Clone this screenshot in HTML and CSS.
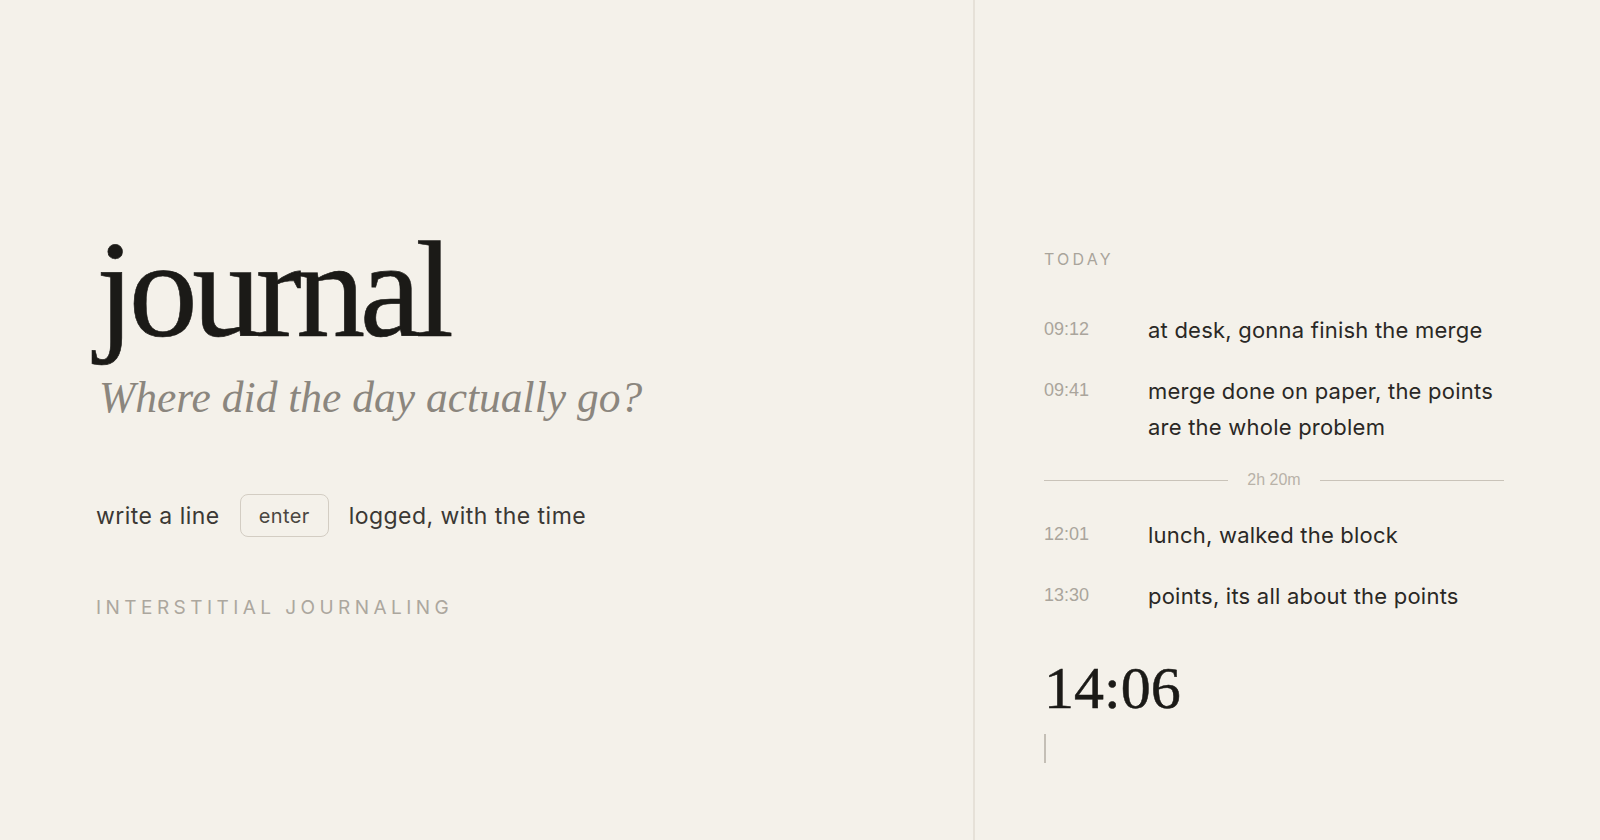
FILE: index.html
```html
<!DOCTYPE html>
<html lang="en">
<head>
<meta charset="utf-8">
<title>journal</title>
<link rel="stylesheet" href="styles.css">
</head>
<body>
<main class="app">
  <section class="intro">
    <h1 class="title">journal</h1>
    <p class="subtitle">Where did the day actually go?</p>
    <div class="howto">
      <span>write a line</span>
      <kbd class="key">enter</kbd>
      <span>logged, with the time</span>
    </div>
    <p class="tag">Interstitial journaling</p>
  </section>
  <section class="log">
    <h2 class="day">Today</h2>
    <ul class="entries">
      <li class="entry"><span class="time">09:12</span><span class="text">at desk, gonna finish the merge</span></li>
      <li class="entry"><span class="time">09:41</span><span class="text">merge done on paper, the points are the whole problem</span></li>
      <li class="gap"><span class="rule"></span><span class="gap-label">2h 20m</span><span class="rule"></span></li>
      <li class="entry"><span class="time">12:01</span><span class="text">lunch, walked the block</span></li>
      <li class="entry"><span class="time">13:30</span><span class="text">points, its all about the points</span></li>
    </ul>
    <div class="clock">14:06</div>
    <div class="cursor"></div>
  </section>
</main>
</body>
</html>
```
FILE: styles.css
```css
* { box-sizing: border-box; }
html, body { margin: 0; padding: 0; }
body {
  background: #f4f1ea;
  font-family: Inter, "Noto Sans", sans-serif;
  color: #2b2926;
  width: 1600px;
  height: 840px;
  overflow: hidden;
}
.app {
  display: grid;
  grid-template-columns: 1fr 627px;
  height: 840px;
}
.intro {
  display: flex;
  flex-direction: column;
  justify-content: center;
  padding-left: 96px;
}
.title {
  margin: 0;
  font-family: "Liberation Serif", serif;
  font-weight: 400;
  font-size: 138px;
  line-height: 138px;
  letter-spacing: -0.04em;
  color: #1b1a17;
  -webkit-text-stroke: 0.6px #1b1a17;
}
.subtitle {
  margin: 12px 0 0 3px;
  font-family: "Liberation Serif", serif;
  font-style: italic;
  font-size: 43.5px;
  line-height: 53px;
  color: #8b867e;
}
.howto {
  margin-top: 70px;
  display: flex;
  align-items: center;
  gap: 20px;
  font-size: 23px;
  letter-spacing: 0.02em;
  color: #3b3834;
  height: 43px;
}
.key {
  font-family: Inter, "Noto Sans", sans-serif;
  font-size: 20px;
  letter-spacing: 0.02em;
  color: #4a4641;
  border: 1px solid #d3cdc3;
  border-radius: 8px;
  height: 43px;
  padding: 0 18px;
  display: flex;
  align-items: center;
}
.tag {
  margin: 60px 0 0;
  font-size: 19px;
  line-height: 22px;
  letter-spacing: 0.234em;
  text-transform: uppercase;
  color: #aca79e;
}
.log {
  border-left: 2px solid #e6e1d8;
  padding: 249px 96px 0 69px;
}
.day {
  margin: 0;
  font-weight: 400;
  font-size: 16px;
  line-height: 20px;
  letter-spacing: 0.2em;
  text-transform: uppercase;
  color: #a9a49b;
}
.entries {
  list-style: none;
  margin: 43px 0 0;
  padding: 0;
  display: flex;
  flex-direction: column;
  gap: 25px;
}
.entry {
  display: grid;
  grid-template-columns: 104px 1fr;
  align-items: baseline;
}
.time {
  font-family: "Liberation Sans", sans-serif;
  font-size: 18px;
  color: #aaa59c;
  position: relative;
  top: -3px;
}
.text {
  font-size: 22px;
  letter-spacing: 0.01em;
  line-height: 36px;
  color: #2a2825;
}
.gap {
  display: flex;
  align-items: center;
  gap: 19px;
  height: 16px;
  margin: 2px 0 4px;
}
.rule {
  flex: 1;
  height: 1px;
  background: #c9c3b9;
}
.gap-label {
  font-family: "Liberation Sans", sans-serif;
  font-size: 16px;
  color: #b8b2a8;
}
.clock {
  margin-top: 44px;
  font-family: "Liberation Serif", serif;
  font-size: 60px;
  line-height: 60px;
  color: #1b1a17;
  -webkit-text-stroke: 0.5px #1b1a17;
}
.cursor {
  margin-top: 16px;
  width: 2px;
  height: 29px;
  background: #c4bfb6;
}
```
